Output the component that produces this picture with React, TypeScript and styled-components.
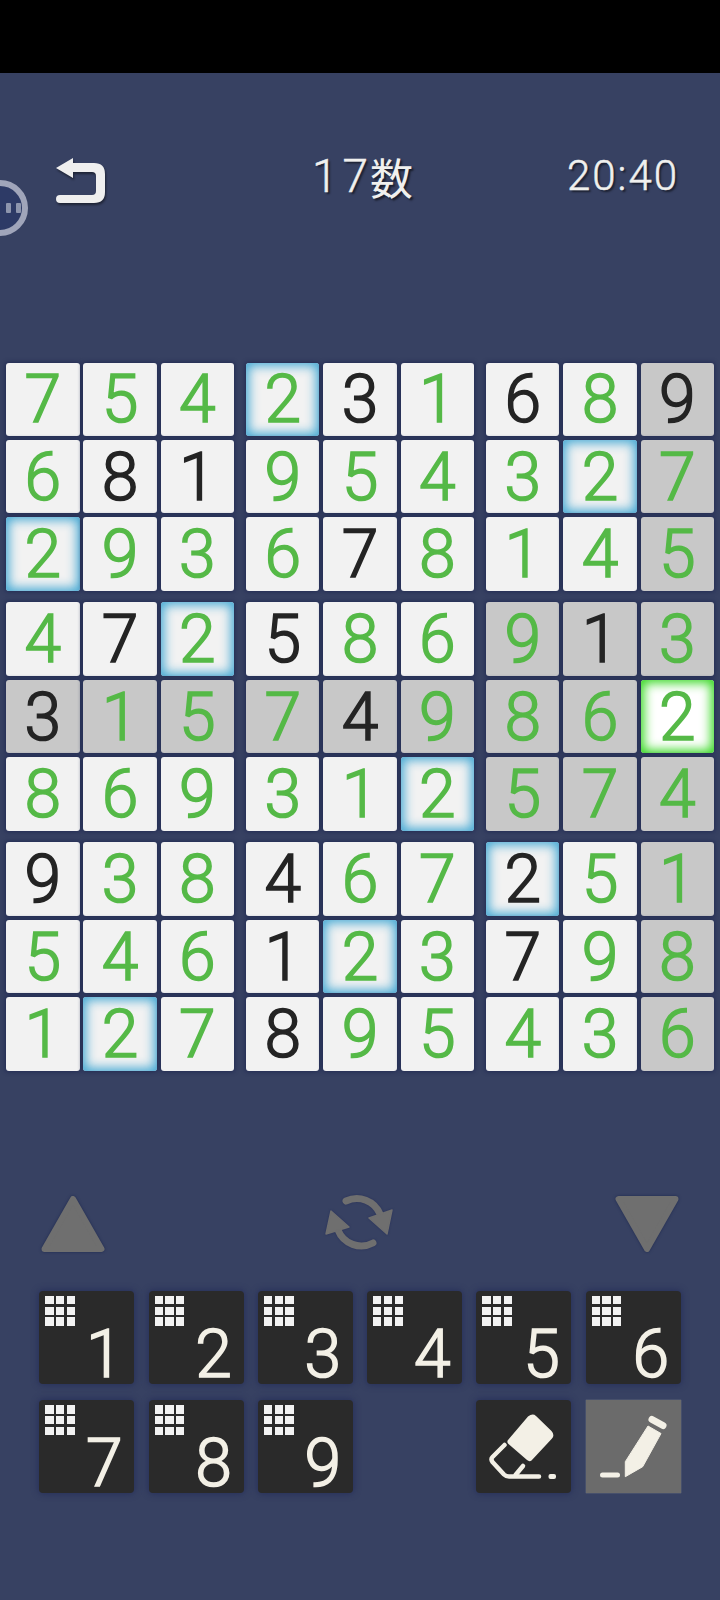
import React from "react";
import styled, { createGlobalStyle } from "styled-components";

const Global = createGlobalStyle`
  html, body { margin: 0; padding: 0; background: #374162; }
  body { width: 720px; height: 1600px; overflow: hidden; }
`;

const DIGIT_FONT = `"Roboto", "Open Sans", sans-serif`;

const Page = styled.div`
  width: 720px;
  height: 1600px;
  background: #374162;
  display: flex;
  flex-direction: column;
  position: relative;
  overflow: hidden;
`;
const TopBar = styled.div`
  height: 73px;
  background: #000;
  flex: none;
`;
const Header = styled.header`
  height: 289.5px;
  flex: none;
  box-sizing: border-box;
  padding: 85px 41px 0 56px;
  display: grid;
  grid-template-columns: 1fr auto 1fr;
  align-items: start;
`;
const BackButton = styled.div`
  width: 50px;
  height: 46px;
  filter: drop-shadow(1px 2px 1px rgba(0, 0, 0, 0.45));
  svg { display: block; }
`;
const HeadText = styled.div`
  font-family: "Roboto", "Noto Sans CJK JP", sans-serif;
  font-weight: 300;
  color: #f0f0ee;
  -webkit-text-stroke: 0.5px #f0f0ee;
  text-shadow: 2px 2px 2px rgba(0, 0, 0, 0.55);
  margin-top: -6px;
`;
const Count = styled(HeadText)`
  display: flex;
  align-items: center;
  margin-left: -10px;
  font-size: 46px;
  line-height: 48px;
  letter-spacing: 5px;
`;
const Kanji = styled.span`
  font-family: "Noto Sans CJK JP", sans-serif;
  font-size: 43px;
  letter-spacing: 0;
  font-weight: 400;
  -webkit-text-stroke: 0;
  margin-left: -3px;
`;
const Timer = styled(HeadText)`
  justify-self: end;
  font-size: 42px;
  line-height: 48px;
  letter-spacing: 2px;
`;
const FloatBall = styled.div`
  position: absolute;
  left: -28px;
  top: 180px;
  width: 56px;
  height: 56px;
  border-radius: 50%;
  background: #2d3a66;
  border: 6px solid #a0a5ba;
  box-sizing: border-box;
  display: flex;
  align-items: center;
  justify-content: flex-end;
  gap: 5px;
  padding-right: 1px;
`;
const BallEye = styled.i`
  display: block;
  width: 5px;
  height: 10px;
  background: #8d95ad;
  border-radius: 1px;
`;
const Board = styled.main`
  flex: none;
  display: grid;
  grid-template-columns: repeat(3, 228.17px);
  gap: 11.83px;
  margin-left: 6px;
`;
const Block = styled.div`
  display: grid;
  grid-template-columns: repeat(3, 73.5px);
  grid-auto-rows: 73.5px;
  gap: 3.83px;
`;
const Cell = styled.div<{ $kind: string; $given: boolean }>`
  border-radius: 3px;
  box-sizing: border-box;
  padding-top: 2px;
  display: flex;
  align-items: center;
  justify-content: center;
  font-family: ${DIGIT_FONT};
  font-weight: 300;
  font-size: 66px;
  line-height: 1;
  color: ${(p) => (p.$given ? "#242424" : "#55b947")};
  -webkit-text-stroke: 1.6px ${(p) => (p.$given ? "#242424" : "#55b947")};
  background: ${(p) =>
    p.$kind === "selected" ? "#fff" : p.$kind === "grey" ? "#c8c8c8" : "#f2f2f2"};
  box-shadow: ${(p) =>
    p.$kind === "selected"
      ? "inset 0 0 11px 3px #35d820, 0 0 4px 1px #232c54"
      : p.$kind === "same"
        ? "inset 0 0 11px 3px #45a9d4, 0 0 4px 1px #232c54"
        : "0 0 4px 1px #232c54"};
`;
const Tools = styled.div`
  flex: none;
  margin-top: 123.5px;
  padding: 0 41px;
  height: 60px;
  display: flex;
  align-items: center;
  justify-content: space-between;
  svg { display: block; }
`;
const TriangleBox = styled.div`
  width: 64px;
  height: 58px;
  filter: drop-shadow(0 0 1.5px #1f2a50);
`;
const Refresh = styled.div`
  width: 70px;
  height: 62px;
  filter: drop-shadow(0 0 1px #27305a);
  svg { display: block; }
`;
const Pad = styled.div`
  flex: none;
  margin-top: 36.7px;
  margin-left: 39.3px;
  display: grid;
  grid-template-columns: repeat(6, 95px);
  grid-auto-rows: 93.3px;
  gap: 16px 14.3px;
`;
const PadButton = styled.div<{ $active?: boolean; $col?: number }>`
  background: ${(p) => (p.$active ? "#6b6b6b" : "#2a2a2a")};
  border-radius: ${(p) => (p.$active ? "0" : "4px")};
  box-shadow: ${(p) => (p.$active ? "0 0 1px #9a9a9a" : "0 0 6px 1px #27305a")};
  grid-column: ${(p) => p.$col ?? "auto"};
  svg { display: block; }
`;
const MiniGrid = styled.div`
  display: grid;
  grid-template-columns: repeat(3, 8.3px);
  grid-auto-rows: 8.3px;
  gap: 2.4px;
  padding: 5.3px 0 0 6px;
`;
const MiniDot = styled.i`
  display: block;
  background: #f2f2f2;
`;
const PadDigit = styled.div`
  width: 60px;
  height: 58px;
  margin-left: auto;
  text-align: center;
  font-family: ${DIGIT_FONT};
  font-weight: 300;
  font-size: 66px;
  line-height: 58px;
  color: #f3f0e6;
  -webkit-text-stroke: 1.6px #f3f0e6;
`;

const rows = [
  "754231689",
  "681954327",
  "293678145",
  "472586913",
  "315749862",
  "869312574",
  "938467251",
  "546123798",
  "127895436",
];
const given = [
  [0, 4], [0, 6], [0, 8], [1, 1], [1, 2], [2, 4], [3, 1], [3, 3], [3, 7],
  [4, 0], [4, 4], [6, 0], [6, 3], [6, 6], [7, 3], [7, 6], [8, 3],
];
const isGiven = (r: number, c: number) => given.some(([a, b]) => a === r && b === c);
const kindOf = (r: number, c: number) => {
  if (r === 4 && c === 8) return "selected";
  if (r === 4 || c === 8 || (r >= 3 && r <= 5 && c >= 6)) return "grey";
  if (rows[r][c] === "2") return "same";
  return "plain";
};

const Triangle = ({ down }: { down?: boolean }) => (
  <TriangleBox>
    <svg width="64" height="58" viewBox="0 0 64 58">
      <path
        d={down ? "M3.5 4 H60.5 L32 54 Z" : "M32 4 L60.5 54 H3.5 Z"}
        fill="#6f6f6f"
        stroke="#6f6f6f"
        strokeWidth="6"
        strokeLinejoin="round"
      />
    </svg>
  </TriangleBox>
);

export default function App() {
  return (
    <Page>
      <Global />
      <TopBar />
      <FloatBall>
        <BallEye />
        <BallEye />
      </FloatBall>
      <Header>
        <BackButton>
          <svg width="50" height="46" viewBox="0 0 50 46">
            <path d="M17 0 V5 H38 Q49 5 49 16 V34 Q49 45 38 45 H4 Q0 45 0 41 Q0 37 4 37 H36 Q40 37 40 33 V18 Q40 14 36 14 H17 V20 L0 10 Z" fill="#efefef" />
          </svg>
        </BackButton>
        <Count>
          17<Kanji>数</Kanji>
        </Count>
        <Timer>20:40</Timer>
      </Header>
      <Board>
        {[0, 1, 2].flatMap((br) =>
          [0, 1, 2].map((bc) => (
            <Block key={`${br}-${bc}`}>
              {[0, 1, 2].flatMap((ir) =>
                [0, 1, 2].map((ic) => {
                  const r = br * 3 + ir;
                  const c = bc * 3 + ic;
                  return (
                    <Cell key={c} $kind={kindOf(r, c)} $given={isGiven(r, c)}>
                      {rows[r][c]}
                    </Cell>
                  );
                })
              )}
            </Block>
          ))
        )}
      </Board>
      <Tools>
        <Triangle />
        <Refresh>
          <svg width="70" height="62" viewBox="0 0 70 62">
            <g fill="none" stroke="#6f6f6f" strokeWidth="7" strokeLinecap="round">
              <path d="M21 8 A25 25 0 0 1 55 21" />
              <path d="M48 50 A25 25 0 0 1 13 37" />
            </g>
            <path d="M67 17 L44 25 L62 41 Z M6 18 L1 41 L24 34 Z" fill="#6f6f6f" stroke="#6f6f6f" strokeWidth="1.5" strokeLinejoin="round" />
          </svg>
        </Refresh>
        <Triangle down />
      </Tools>
      <Pad>
        {[1, 2, 3, 4, 5, 6, 7, 8, 9].map((n) => (
          <PadButton key={n}>
            <MiniGrid>
              {Array.from({ length: 9 }, (_, i) => (
                <MiniDot key={i} />
              ))}
            </MiniGrid>
            <PadDigit>{n}</PadDigit>
          </PadButton>
        ))}
        <PadButton $col={5}>
          <svg width="95" height="93" viewBox="0 0 95 93">
            <path d="M52 16.5 Q56.7 13 60 16 L75.5 31 Q79 35 76 38.5 L55.5 60.5 Q53.3 62 51 60 L32.5 44 Q30.5 42 32 40 Z" fill="#f3f0e6" />
            <path d="M28.5 45 L16.5 57 Q14.5 59 16.5 62 L28 74.5 Q30 76.5 33 76.5 H63" fill="none" stroke="#f3f0e6" strokeWidth="4.5" strokeLinecap="round" strokeLinejoin="round" />
            <path d="M47 66 L39.5 75" fill="none" stroke="#f3f0e6" strokeWidth="4.5" strokeLinecap="round" />
            <rect x="72.5" y="74" width="7.5" height="5" rx="2" fill="#f3f0e6" />
          </svg>
        </PadButton>
        <PadButton $active>
          <svg width="95" height="93" viewBox="0 0 95 93">
            <path d="M39.3 61.7 L62 26 L75 33.5 L56.7 66.7 L39.3 76.7 Z" fill="#f3f0e6" strokeLinejoin="round" stroke="#f3f0e6" strokeWidth="1" />
            <path d="M66 19.5 L77 25.5" stroke="#f3f0e6" strokeWidth="7" strokeLinecap="round" />
            <rect x="14" y="72.5" width="20" height="5" rx="2.5" fill="#f3f0e6" />
          </svg>
        </PadButton>
      </Pad>
    </Page>
  );
}
